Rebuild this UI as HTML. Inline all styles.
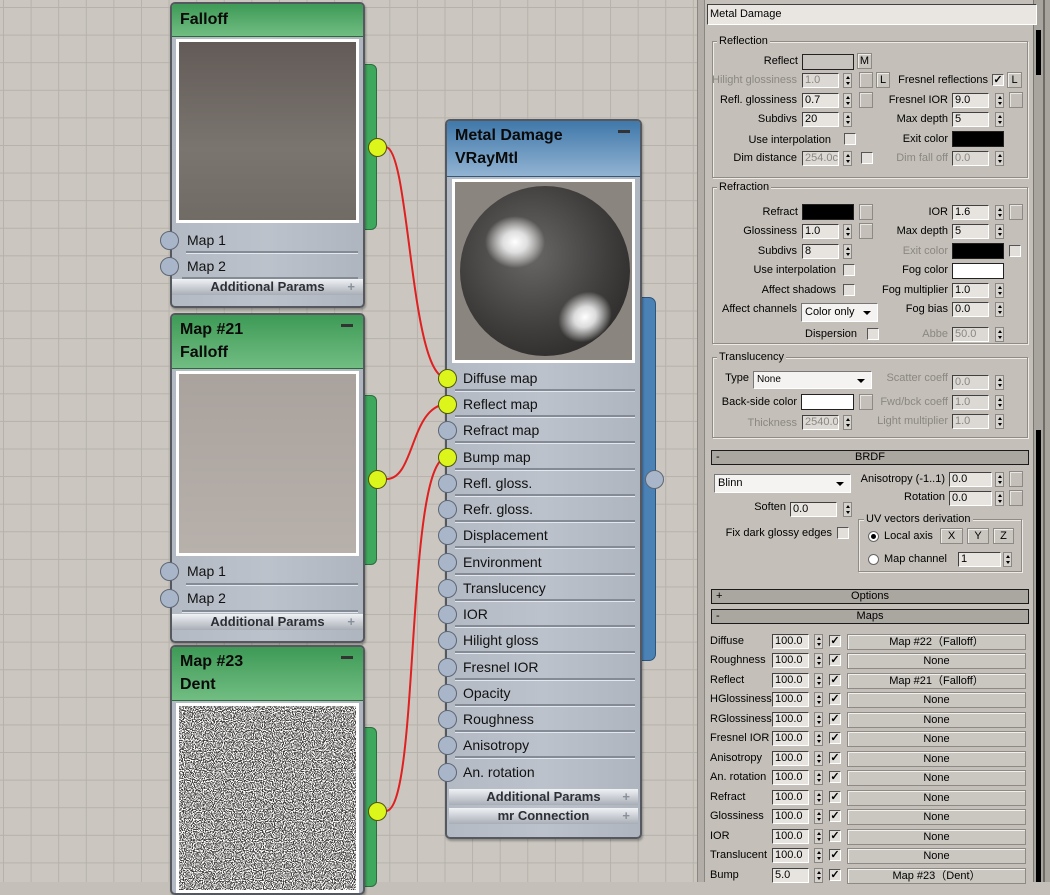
<!DOCTYPE html>
<html><head><meta charset="utf-8"><style>
*{margin:0;padding:0;box-sizing:border-box}
body{width:1050px;height:882px;overflow:hidden;position:relative;font-family:"Liberation Sans",Arial,sans-serif;background:#c4c0b9}
.abs{position:absolute}
#canvas{position:absolute;left:0;top:0;width:698px;height:882px;background-color:#cbc7c0;
background-image:linear-gradient(90deg,#b6b2ab 1px,transparent 1px),linear-gradient(#b6b2ab 1px,transparent 1px);
background-size:27.6px 27.6px;background-position:3px 7px}
.node{position:absolute;background:linear-gradient(90deg,#b3bac4,#bcc2cb 50%,#aeb5bf);border:2px solid #55595f;border-radius:5px;box-shadow:1px 2px 2px rgba(0,0,0,.3)}
.gh{position:absolute;left:0;right:0;top:0;background:linear-gradient(#3e9a56,#71bd82);border-bottom:1px solid #2c6a3b;border-radius:3px 3px 0 0}
.bh{position:absolute;left:0;right:0;top:0;background:linear-gradient(#3f78aa,#92b3d2);border-bottom:1px solid #34577a;border-radius:3px 3px 0 0}
.ht{position:absolute;left:8px;font-size:16px;font-weight:bold;color:#0a0a0a}
.mn{position:absolute;right:10px;top:9px;width:12px;height:3px;background:#333}
.pv{position:absolute;border:3px solid #fff;overflow:hidden}
.row{position:absolute;font-size:14px;color:#111;height:26px;line-height:26px}
.sep{position:absolute;height:3px;border-top:2px solid #858b94;border-bottom:1px solid #e4e8ee}
.in{position:absolute;width:19px;height:19px;border-radius:50%;background:#a9b5c8;border:1px solid #5d6673}
.out{position:absolute;width:19px;height:19px;border-radius:50%;background:#dcf51a;border:1px solid #4d5510}
.ap{position:absolute;height:16px;background:linear-gradient(#f0f2f5,#a9aeb6);font-size:13px;font-weight:bold;color:#2c2f35;text-align:center;line-height:16px}
.ap i{position:absolute;right:8px;top:0;font-style:normal;color:#8a9099}
.gt{position:absolute;background:#3ea85c;border:1px solid #2b6e3e;border-radius:0 6px 6px 0}
/* panel */
.l{position:absolute;font-size:11px;color:#000;white-space:nowrap;line-height:14px}
.g{color:#8a8782}
.f{position:absolute;height:15px;background:#e7e4e0;border:1px solid;border-color:#404040 #fff #fff #404040;font-size:11px;line-height:13px;padding-left:2px;color:#000}
.fg{color:#8a8782;background:#dcd9d4}
.a{position:absolute;width:9px;height:15px;background:#d6d3ce;border:1px solid #8a8782}
.a:before{content:"";position:absolute;left:2px;top:2px;border:2px solid transparent;border-bottom:3px solid #000;border-top:0}
.a:after{content:"";position:absolute;left:2px;bottom:2px;border:2px solid transparent;border-top:3px solid #000;border-bottom:0}
.sq{position:absolute;width:14px;height:16px;background:#c4c0b9;border:1px solid #8d8a85;box-shadow:inset 1px 1px #e8e6e2}
.cb{position:absolute;width:12px;height:12px;background:#e2dfdb;border:1px solid;border-color:#555 #fff #fff #555;font-size:11px;line-height:10px;text-align:center;font-weight:bold}
.sw{position:absolute;height:16px;border:1px solid #222}
.btn{position:absolute;height:16px;background:#c9c5bf;border:1px solid #8d8a85;box-shadow:inset 1px 1px #efedea;font-size:11px;text-align:center;line-height:14px}
.grp{position:absolute;border:1px solid #8f8c86;box-shadow:1px 1px #eeebe7,inset 1px 1px #eeebe7}
.gl{position:absolute;font-size:11px;background:#c4c0b9;padding:0 2px;line-height:12px}
.bar{position:absolute;left:711px;width:318px;height:15px;background:#aaa6a0;border:1px solid #1a1a1a;font-size:11px;text-align:center;line-height:13px}
.bar b{position:absolute;left:4px;top:0;font-weight:normal}
.dd{position:absolute;height:19px;background:#f4f3f1;border:1px solid;border-color:#777 #fff #fff #777;font-size:11px;line-height:17px;padding-left:3px}
.dd:after{content:"";position:absolute;right:6px;top:7px;border:4px solid transparent;border-top:4px solid #000}
.mb{position:absolute;left:847px;width:179px;height:16px;background:#cac6c0;border:1px solid #8d8a85;box-shadow:inset 1px 1px #f2f0ed;font-size:11px;text-align:center;line-height:14px}
</style></head><body>
<div id="canvas"></div>

<!-- wires -->
<svg class="abs" style="left:0;top:0" width="698" height="882">
<path d="M386 147 C410 150,410 380,447 378" stroke="#e02020" stroke-width="2" fill="none"/>
<path d="M386 479 C415 480,410 406,447 404" stroke="#e02020" stroke-width="2" fill="none"/>
<path d="M386 811 C420 810,405 460,447 457" stroke="#e02020" stroke-width="2" fill="none"/>
<defs>
<filter id="nz"><feTurbulence type="fractalNoise" baseFrequency="0.9" numOctaves="1" seed="3"/><feColorMatrix type="matrix" values="0 0 0 0 1 0 0 0 0 1 0 0 0 0 1 0 0 0 -9 5"/></filter>
<radialGradient id="sp" cx="0.42" cy="0.4" r="0.65"><stop offset="0" stop-color="#6a6866"/><stop offset="0.7" stop-color="#3f3d3c"/><stop offset="1" stop-color="#2e2d2c"/></radialGradient>
<radialGradient id="h1" cx="0.5" cy="0.5" r="0.5"><stop offset="0" stop-color="#fff"/><stop offset="0.4" stop-color="#eee" stop-opacity=".9"/><stop offset="1" stop-color="#fff" stop-opacity="0"/></radialGradient>
</defs>
</svg>

<!-- node 1 -->
<div class="gt" style="left:362px;top:64px;width:15px;height:166px"></div>
<div class="node" style="left:170px;top:2px;width:195px;height:306px">
 <div class="gh" style="height:33px"><div class="ht" style="top:7px">Falloff</div></div>
</div>
<div class="pv" style="left:176px;top:39px;width:183px;height:184px;background:linear-gradient(#625b57,#7b7570 60%,#716b66)"></div>
<div class="row" style="left:187px;top:227px">Map 1</div><div class="sep" style="left:186px;top:251px;width:172px"></div>
<div class="row" style="left:187px;top:253px">Map 2</div><div class="sep" style="left:182px;top:277px;width:176px"></div>
<div class="ap" style="left:172px;top:279px;width:191px">Additional Params<i>+</i></div>
<div class="in" style="left:160px;top:231px"></div><div class="in" style="left:160px;top:257px"></div>
<div class="out" style="left:368px;top:138px"></div>

<!-- node 2 -->
<div class="gt" style="left:362px;top:395px;width:15px;height:170px"></div>
<div class="node" style="left:170px;top:313px;width:195px;height:330px">
 <div class="gh" style="height:54px"><div class="ht" style="top:6px">Map #21</div><div class="ht" style="top:29px">Falloff</div><div class="mn"></div></div>
</div>
<div class="pv" style="left:176px;top:371px;width:183px;height:185px;background:linear-gradient(#a9a29d,#b7b0ab)"></div>
<div class="row" style="left:187px;top:558px">Map 1</div><div class="sep" style="left:186px;top:583px;width:172px"></div>
<div class="row" style="left:187px;top:585px">Map 2</div><div class="sep" style="left:182px;top:610px;width:176px"></div>
<div class="ap" style="left:172px;top:614px;width:191px">Additional Params<i>+</i></div>
<div class="in" style="left:160px;top:562px"></div><div class="in" style="left:160px;top:589px"></div>
<div class="out" style="left:368px;top:470px"></div>

<!-- node 3 -->
<div class="gt" style="left:362px;top:727px;width:15px;height:160px"></div>
<div class="node" style="left:170px;top:645px;width:195px;height:250px">
 <div class="gh" style="height:54px"><div class="ht" style="top:6px">Map #23</div><div class="ht" style="top:29px">Dent</div><div class="mn"></div></div>
</div>
<div class="pv" style="left:176px;top:703px;width:183px;height:190px;background:#5a5654">
<svg width="183" height="190"><rect width="183" height="190" fill="#3e3b39"/><rect width="183" height="190" filter="url(#nz)" fill="#fff"/></svg>
</div>
<div class="out" style="left:368px;top:802px"></div>

<!-- main node -->
<div class="abs" style="left:638px;top:297px;width:18px;height:364px;background:#4a82b6;border:1px solid #2c557d;border-radius:0 7px 7px 0"></div>
<div class="node" style="left:445px;top:119px;width:197px;height:720px">
 <div class="bh" style="height:56px"><div class="ht" style="top:6px">Metal Damage</div><div class="ht" style="top:29px">VRayMtl</div><div class="mn"></div></div>
</div>
<div class="pv" style="left:452px;top:179px;width:183px;height:184px;background:#8b8580">
<svg width="177" height="178" style="display:block"><circle cx="90" cy="89" r="85" fill="url(#sp)"/>
<ellipse cx="60" cy="60" rx="30" ry="26" fill="url(#h1)"/><ellipse cx="130" cy="135" rx="28" ry="24" fill="url(#h1)" transform="rotate(-35 130 135)"/></svg></div>
<div class="out" style="left:645px;top:470px;background:#a9b5c8;border-color:#5d6673"></div>

<div class="row" style="left:463px;top:365px">Diffuse map</div>
<div class="row" style="left:463px;top:391px">Reflect map</div>
<div class="row" style="left:463px;top:417px">Refract map</div>
<div class="row" style="left:463px;top:444px">Bump map</div>
<div class="row" style="left:463px;top:470px">Refl. gloss.</div>
<div class="row" style="left:463px;top:496px">Refr. gloss.</div>
<div class="row" style="left:463px;top:522px">Displacement</div>
<div class="row" style="left:463px;top:549px">Environment</div>
<div class="row" style="left:463px;top:575px">Translucency</div>
<div class="row" style="left:463px;top:601px">IOR</div>
<div class="row" style="left:463px;top:627px">Hilight gloss</div>
<div class="row" style="left:463px;top:654px">Fresnel IOR</div>
<div class="row" style="left:463px;top:680px">Opacity</div>
<div class="row" style="left:463px;top:706px">Roughness</div>
<div class="row" style="left:463px;top:732px">Anisotropy</div>
<div class="row" style="left:463px;top:759px">An. rotation</div>
<div class="sep" style="left:455px;top:389px;width:180px"></div>
<div class="sep" style="left:455px;top:415px;width:180px"></div>
<div class="sep" style="left:455px;top:441px;width:180px"></div>
<div class="sep" style="left:455px;top:468px;width:180px"></div>
<div class="sep" style="left:455px;top:494px;width:180px"></div>
<div class="sep" style="left:455px;top:520px;width:180px"></div>
<div class="sep" style="left:455px;top:546px;width:180px"></div>
<div class="sep" style="left:455px;top:573px;width:180px"></div>
<div class="sep" style="left:455px;top:599px;width:180px"></div>
<div class="sep" style="left:455px;top:625px;width:180px"></div>
<div class="sep" style="left:455px;top:651px;width:180px"></div>
<div class="sep" style="left:455px;top:678px;width:180px"></div>
<div class="sep" style="left:455px;top:704px;width:180px"></div>
<div class="sep" style="left:455px;top:730px;width:180px"></div>
<div class="sep" style="left:455px;top:756px;width:180px"></div>
<div class="ap" style="left:449px;top:789px;width:189px">Additional Params<i>+</i></div>
<div class="ap" style="left:449px;top:808px;width:189px">mr Connection<i>+</i></div>
<div class="out" style="left:438px;top:369px"></div>
<div class="out" style="left:438px;top:395px"></div>
<div class="in" style="left:438px;top:421px"></div>
<div class="out" style="left:438px;top:448px"></div>
<div class="in" style="left:438px;top:474px"></div>
<div class="in" style="left:438px;top:500px"></div>
<div class="in" style="left:438px;top:526px"></div>
<div class="in" style="left:438px;top:553px"></div>
<div class="in" style="left:438px;top:579px"></div>
<div class="in" style="left:438px;top:605px"></div>
<div class="in" style="left:438px;top:631px"></div>
<div class="in" style="left:438px;top:658px"></div>
<div class="in" style="left:438px;top:684px"></div>
<div class="in" style="left:438px;top:710px"></div>
<div class="in" style="left:438px;top:736px"></div>
<div class="in" style="left:438px;top:763px"></div>

<!-- divider & panel -->
<div class="abs" style="left:697px;top:0;width:8px;height:882px;background:#b3afa8;border-left:1px solid #8a8680;border-right:1px solid #8a8680"></div>
<div class="abs" style="left:1033px;top:0;width:17px;height:882px;background:#a8a49e;border-left:1px solid #7a7670"></div>
<div class="abs" style="left:1036px;top:30px;width:5px;height:45px;background:#000"></div>
<div class="abs" style="left:1036px;top:430px;width:5px;height:452px;background:#000"></div>
<div class="abs" style="left:1043px;top:0;width:2px;height:882px;background:#6f6b66"></div>

<div class="f" style="left:707px;top:4px;width:330px;height:21px;background:#e9e6e2;line-height:18px">Metal Damage</div>

<!-- Reflection -->
<div class="grp" style="left:712px;top:41px;width:316px;height:137px"></div><div class="gl" style="left:717px;top:35px">Reflection</div>
<div class="l" style="right:252px;top:54px">Reflect</div><div class="sw" style="left:802px;top:54px;width:52px;background:#c7c4c0"></div><div class="btn" style="left:857px;top:53px;width:15px">M</div>
<div class="l g" style="right:253px;top:73px">Hilight glossiness</div><div class="f fg" style="left:802px;top:73px;width:37px">1.0</div><div class="a" style="left:843px;top:73px"></div><div class="sq" style="left:859px;top:72px"></div><div class="btn" style="left:876px;top:72px;width:14px">L</div>
<div class="l" style="right:62px;top:73px">Fresnel reflections</div><div class="cb" style="left:992px;top:74px">✓</div><div class="btn" style="left:1007px;top:72px;width:15px">L</div>
<div class="l" style="right:253px;top:93px">Refl. glossiness</div><div class="f" style="left:802px;top:93px;width:37px">0.7</div><div class="a" style="left:843px;top:93px"></div><div class="sq" style="left:859px;top:92px"></div>
<div class="l" style="right:102px;top:93px">Fresnel IOR</div><div class="f" style="left:952px;top:93px;width:37px">9.0</div><div class="a" style="left:995px;top:93px"></div><div class="sq" style="left:1009px;top:92px"></div>
<div class="l" style="right:253px;top:112px">Subdivs</div><div class="f" style="left:802px;top:112px;width:37px">20</div><div class="a" style="left:843px;top:112px"></div>
<div class="l" style="right:102px;top:112px">Max depth</div><div class="f" style="left:952px;top:112px;width:37px">5</div><div class="a" style="left:995px;top:112px"></div>
<div class="l" style="right:219px;top:133px">Use interpolation</div><div class="cb" style="left:844px;top:133px"></div>
<div class="l" style="right:102px;top:132px">Exit color</div><div class="sw" style="left:952px;top:131px;width:52px;background:#000"></div>
<div class="l" style="right:253px;top:151px">Dim distance</div><div class="f fg" style="left:802px;top:151px;width:37px">254.0c</div><div class="a" style="left:843px;top:151px"></div><div class="cb" style="left:861px;top:152px"></div>
<div class="l g" style="right:102px;top:151px">Dim fall off</div><div class="f fg" style="left:952px;top:151px;width:37px">0.0</div><div class="a" style="left:995px;top:151px"></div>

<!-- Refraction -->
<div class="grp" style="left:712px;top:187px;width:316px;height:157px"></div><div class="gl" style="left:717px;top:181px">Refraction</div>
<div class="l" style="right:252px;top:205px">Refract</div><div class="sw" style="left:802px;top:204px;width:52px;background:#000"></div><div class="sq" style="left:859px;top:204px"></div>
<div class="l" style="right:102px;top:205px">IOR</div><div class="f" style="left:952px;top:205px;width:37px">1.6</div><div class="a" style="left:995px;top:205px"></div><div class="sq" style="left:1009px;top:204px"></div>
<div class="l" style="right:253px;top:224px">Glossiness</div><div class="f" style="left:802px;top:224px;width:37px">1.0</div><div class="a" style="left:843px;top:224px"></div><div class="sq" style="left:859px;top:223px"></div>
<div class="l" style="right:102px;top:224px">Max depth</div><div class="f" style="left:952px;top:224px;width:37px">5</div><div class="a" style="left:995px;top:224px"></div>
<div class="l" style="right:253px;top:244px">Subdivs</div><div class="f" style="left:802px;top:244px;width:37px">8</div><div class="a" style="left:843px;top:244px"></div>
<div class="l g" style="right:102px;top:244px">Exit color</div><div class="sw" style="left:952px;top:243px;width:52px;background:#000"></div><div class="cb" style="left:1009px;top:245px"></div>
<div class="l" style="right:214px;top:263px">Use interpolation</div><div class="cb" style="left:843px;top:264px"></div>
<div class="l" style="right:102px;top:263px">Fog color</div><div class="sw" style="left:952px;top:263px;width:52px;background:#fff"></div>
<div class="l" style="right:214px;top:283px">Affect shadows</div><div class="cb" style="left:843px;top:284px"></div>
<div class="l" style="right:102px;top:283px">Fog multiplier</div><div class="f" style="left:952px;top:283px;width:37px">1.0</div><div class="a" style="left:995px;top:283px"></div>
<div class="l" style="right:253px;top:302px">Affect channels</div><div class="dd" style="left:801px;top:303px;width:77px">Color only</div>
<div class="l" style="right:102px;top:302px">Fog bias</div><div class="f" style="left:952px;top:302px;width:37px">0.0</div><div class="a" style="left:995px;top:302px"></div>
<div class="l" style="right:193px;top:327px">Dispersion</div><div class="cb" style="left:867px;top:328px"></div>
<div class="l g" style="right:102px;top:327px">Abbe</div><div class="f fg" style="left:952px;top:327px;width:37px">50.0</div><div class="a" style="left:995px;top:327px"></div>

<!-- Translucency -->
<div class="grp" style="left:712px;top:357px;width:316px;height:81px"></div><div class="gl" style="left:717px;top:351px">Translucency</div>
<div class="l" style="right:301px;top:371px">Type</div><div class="dd" style="left:753px;top:371px;width:119px;height:18px;line-height:16px;font-size:10px">None</div>
<div class="l g" style="right:102px;top:371px">Scatter coeff</div><div class="f fg" style="left:952px;top:375px;width:37px">0.0</div><div class="a" style="left:995px;top:375px"></div>
<div class="l" style="right:253px;top:395px">Back-side color</div><div class="sw" style="left:801px;top:394px;width:53px;background:#fff"></div><div class="sq" style="left:859px;top:394px"></div>
<div class="l g" style="right:102px;top:395px">Fwd/bck coeff</div><div class="f fg" style="left:952px;top:395px;width:37px">1.0</div><div class="a" style="left:995px;top:395px"></div>
<div class="l g" style="right:253px;top:416px">Thickness</div><div class="f fg" style="left:802px;top:415px;width:37px">2540.0</div><div class="a" style="left:843px;top:415px"></div>
<div class="l g" style="right:102px;top:414px">Light multiplier</div><div class="f fg" style="left:952px;top:414px;width:37px">1.0</div><div class="a" style="left:995px;top:414px"></div>

<!-- BRDF -->
<div class="bar" style="top:450px"><b>-</b>BRDF</div>
<div class="dd" style="left:714px;top:474px;width:137px">Blinn</div>
<div class="l" style="right:105px;top:472px">Anisotropy (-1..1)</div><div class="f" style="left:949px;top:472px;width:43px">0.0</div><div class="a" style="left:995px;top:472px"></div><div class="sq" style="left:1009px;top:471px"></div>
<div class="l" style="right:105px;top:490px">Rotation</div><div class="f" style="left:949px;top:491px;width:43px">0.0</div><div class="a" style="left:995px;top:491px"></div><div class="sq" style="left:1009px;top:490px"></div>
<div class="l" style="right:264px;top:500px">Soften</div><div class="f" style="left:790px;top:502px;width:47px">0.0</div><div class="a" style="left:843px;top:502px"></div>
<div class="l" style="right:218px;top:526px">Fix dark glossy edges</div><div class="cb" style="left:837px;top:527px"></div>
<div class="grp" style="left:858px;top:519px;width:164px;height:53px"></div><div class="gl" style="left:864px;top:513px">UV vectors derivation</div>
<div class="abs" style="left:868px;top:531px;width:11px;height:11px;border-radius:50%;background:#fff;border:1px solid #666"><div class="abs" style="left:2px;top:2px;width:5px;height:5px;border-radius:50%;background:#000"></div></div>
<div class="l" style="left:884px;top:529px">Local axis</div>
<div class="btn" style="left:940px;top:528px;width:23px">X</div><div class="btn" style="left:967px;top:528px;width:22px">Y</div><div class="btn" style="left:993px;top:528px;width:21px">Z</div>
<div class="abs" style="left:868px;top:554px;width:11px;height:11px;border-radius:50%;background:#fff;border:1px solid #666"></div>
<div class="l" style="left:884px;top:552px">Map channel</div><div class="f" style="left:958px;top:552px;width:43px">1</div><div class="a" style="left:1003px;top:552px"></div>

<div class="bar" style="top:589px"><b>+</b>Options</div>
<div class="bar" style="top:609px"><b>-</b>Maps</div>

<!-- Maps -->
<div class="l" style="left:710px;top:634px">Diffuse</div><div class="f" style="left:772px;top:634px;width:37px">100.0</div><div class="a" style="left:814px;top:634px"></div><div class="cb" style="left:829px;top:635px">✓</div><div class="mb" style="top:634px">Map #22（Falloff）</div>
<div class="l" style="left:710px;top:653px">Roughness</div><div class="f" style="left:772px;top:653px;width:37px">100.0</div><div class="a" style="left:814px;top:653px"></div><div class="cb" style="left:829px;top:654px">✓</div><div class="mb" style="top:653px">None</div>
<div class="l" style="left:710px;top:673px">Reflect</div><div class="f" style="left:772px;top:673px;width:37px">100.0</div><div class="a" style="left:814px;top:673px"></div><div class="cb" style="left:829px;top:674px">✓</div><div class="mb" style="top:673px">Map #21（Falloff）</div>
<div class="l" style="left:710px;top:692px">HGlossiness</div><div class="f" style="left:772px;top:692px;width:37px">100.0</div><div class="a" style="left:814px;top:692px"></div><div class="cb" style="left:829px;top:693px">✓</div><div class="mb" style="top:692px">None</div>
<div class="l" style="left:710px;top:712px">RGlossiness</div><div class="f" style="left:772px;top:712px;width:37px">100.0</div><div class="a" style="left:814px;top:712px"></div><div class="cb" style="left:829px;top:713px">✓</div><div class="mb" style="top:712px">None</div>
<div class="l" style="left:710px;top:731px">Fresnel IOR</div><div class="f" style="left:772px;top:731px;width:37px">100.0</div><div class="a" style="left:814px;top:731px"></div><div class="cb" style="left:829px;top:732px">✓</div><div class="mb" style="top:731px">None</div>
<div class="l" style="left:710px;top:751px">Anisotropy</div><div class="f" style="left:772px;top:751px;width:37px">100.0</div><div class="a" style="left:814px;top:751px"></div><div class="cb" style="left:829px;top:752px">✓</div><div class="mb" style="top:751px">None</div>
<div class="l" style="left:710px;top:770px">An. rotation</div><div class="f" style="left:772px;top:770px;width:37px">100.0</div><div class="a" style="left:814px;top:770px"></div><div class="cb" style="left:829px;top:771px">✓</div><div class="mb" style="top:770px">None</div>
<div class="l" style="left:710px;top:790px">Refract</div><div class="f" style="left:772px;top:790px;width:37px">100.0</div><div class="a" style="left:814px;top:790px"></div><div class="cb" style="left:829px;top:791px">✓</div><div class="mb" style="top:790px">None</div>
<div class="l" style="left:710px;top:809px">Glossiness</div><div class="f" style="left:772px;top:809px;width:37px">100.0</div><div class="a" style="left:814px;top:809px"></div><div class="cb" style="left:829px;top:810px">✓</div><div class="mb" style="top:809px">None</div>
<div class="l" style="left:710px;top:829px">IOR</div><div class="f" style="left:772px;top:829px;width:37px">100.0</div><div class="a" style="left:814px;top:829px"></div><div class="cb" style="left:829px;top:830px">✓</div><div class="mb" style="top:829px">None</div>
<div class="l" style="left:710px;top:848px">Translucent</div><div class="f" style="left:772px;top:848px;width:37px">100.0</div><div class="a" style="left:814px;top:848px"></div><div class="cb" style="left:829px;top:849px">✓</div><div class="mb" style="top:848px">None</div>
<div class="l" style="left:710px;top:868px">Bump</div><div class="f" style="left:772px;top:868px;width:37px">5.0</div><div class="a" style="left:814px;top:868px"></div><div class="cb" style="left:829px;top:869px">✓</div><div class="mb" style="top:868px">Map #23（Dent）</div>
</body></html>
